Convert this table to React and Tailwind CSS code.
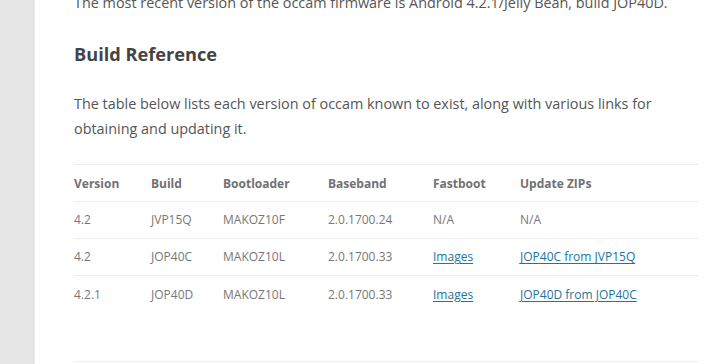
export default function App() {
  const rows = [
    ["4.2", "JVP15Q", "MAKOZ10F", "2.0.1700.24", "N/A", "N/A", false],
    ["4.2", "JOP40C", "MAKOZ10L", "2.0.1700.33", "Images", "JOP40C from JVP15Q", true],
    ["4.2.1", "JOP40D", "MAKOZ10L", "2.0.1700.33", "Images", "JOP40D from JOP40C", true],
  ];
  const cols = ["w-[77px]", "w-[72px]", "w-[105px]", "w-[105px]", "w-[87px]", ""];
  return (
    <div className="flex h-[364px] w-[725px] overflow-hidden bg-[#e6e6e6]" style={{ fontFamily: '"Open Sans", sans-serif' }}>
      <div className="w-[33px] shrink-0" />
      <div className="w-[2px] shrink-0 bg-gradient-to-r from-[#dcdcdc] to-[#f2f2f2]" />
      <div className="flex-1 bg-white pl-[39px] pr-[27px]">
        <p className="-mt-[9px] text-[14.4px] leading-[24px] text-[#555]">
          The most recent version of the occam firmware is Android 4.2.1/Jelly Bean, build JOP40D.
        </p>
        <h2 className="mt-[25px] text-[18.2px] font-bold leading-[29px] text-[#444]">Build Reference</h2>
        <p className="mt-[22px] text-[14.4px] leading-[25px] text-[#555]">
          The table below lists each version of occam known to exist, along with various links for obtaining and updating it.
        </p>
        <div className="mt-[23px] border-t border-[#ededed]">
          <div className="flex h-[37px] items-center border-b border-[#ededed] pt-[1px] text-[12px] font-bold text-[#717171]">
            {["Version", "Build", "Bootloader", "Baseband", "Fastboot", "Update ZIPs"].map((h, i) => (
              <div key={h} className={cols[i]}>{h}</div>
            ))}
          </div>
          {rows.map((r, ri) => (
            <div
              key={ri}
              className={
                ri < 2
                  ? "flex h-[37px] items-center border-b border-[#ededed] text-[12px] text-[#777]"
                  : "flex h-[37px] items-center text-[12px] text-[#777]"
              }
            >
              {r.slice(0, 6).map((c, i) => (
                <div key={i} className={cols[i]}>
                  {r[6] && i >= 4 ? (
                    <a className="text-[#21759b] underline underline-offset-2">{c}</a>
                  ) : (
                    c
                  )}
                </div>
              ))}
            </div>
          ))}
        </div>
        <div className="mt-[48px] h-[4px] border-y border-[#ececec]" />
      </div>
    </div>
  );
}
